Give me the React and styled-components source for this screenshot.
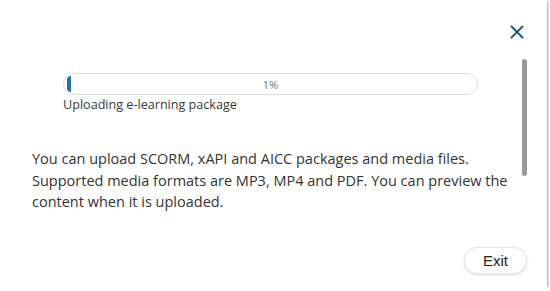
import React from 'react';
import styled, { createGlobalStyle } from 'styled-components';

const GlobalStyle = createGlobalStyle`
  html, body {
    margin: 0;
    padding: 0;
    background: #fff;
  }
  body {
    font-family: "Open Sans", "Noto Sans", sans-serif;
    color: #333;
  }
`;

const App = () => {
  const progress = 1;

  return (
    <>
      <GlobalStyle />
      <Dialog>
        <Header>
          <CloseButton aria-label="Close">
            <svg width="14" height="14" viewBox="0 0 14 14">
              <path d="M1.5 1.5 L12.5 12.5 M12.5 1.5 L1.5 12.5" stroke="#1f5d72" strokeWidth="2" strokeLinecap="round" fill="none" />
            </svg>
          </CloseButton>
        </Header>

        <Body>
          <Content>
            <Upload>
              <Track>
                <Fill style={{ width: `${progress}%` }} />
                <Percent>{progress}%</Percent>
              </Track>
              <Status>Uploading e-learning package</Status>
            </Upload>

            <Info>
              You can upload SCORM, xAPI and AICC packages and media files.
              Supported media formats are MP3, MP4 and PDF. You can preview the
              content when it is uploaded.
            </Info>
          </Content>
          <Scrollbar />
        </Body>

        <Footer>
          <ExitButton>Exit</ExitButton>
        </Footer>
      </Dialog>
    </>
  );
};

const Dialog = styled.div`
  width: 547px;
  height: 287px;
  background: #fff;
  box-shadow: 0 2px 3px rgba(0, 0, 0, 0.55), 1px 0 1px rgba(0, 0, 0, 0.08);
  display: flex;
  flex-direction: column;
`;

const Header = styled.div`
  display: flex;
  justify-content: flex-end;
  padding: 25px 23px 0 0;
  height: 34px;
`;

const CloseButton = styled.button`
  border: none;
  background: none;
  padding: 0;
  width: 14px;
  height: 14px;
  cursor: pointer;
  display: flex;
`;

const Body = styled.div`
  display: flex;
  margin-right: 20px;
`;

const Content = styled.div`
  flex: 1;
  padding: 14px 0 0 32px;
`;

const Upload = styled.div`
  margin-left: 31px;
  width: 415px;
`;

const Track = styled.div`
  position: relative;
  height: 22px;
  box-sizing: border-box;
  border: 1px solid #dedede;
  border-radius: 11px;
  overflow: hidden;
  padding: 2px 3px;
  display: flex;
  align-items: stretch;
`;

const Fill = styled.div`
  min-width: 4px;
  background: #1b7a9c;
  border-radius: 9px 0 0 9px;
`;

const Percent = styled.span`
  position: absolute;
  inset: 0;
  display: flex;
  align-items: center;
  justify-content: center;
  font-size: 11px;
  color: #777;
`;

const Status = styled.div`
  margin-top: 1px;
  font-size: 12.6px;
  line-height: 18px;
  color: #3a3a3a;
`;

const Info = styled.p`
  margin: 34px 0 0;
  font-size: 14.5px;
  line-height: 21.7px;
  color: #333;
`;

const Scrollbar = styled.div`
  width: 5px;
  height: 117px;
  border-radius: 3px;
  background: #999;
`;

const Footer = styled.div`
  margin-top: auto;
  display: flex;
  justify-content: flex-end;
  padding: 0 20px 13px 0;
`;

const ExitButton = styled.button`
  width: 63px;
  height: 27px;
  border: 1px solid #e6e6e6;
  border-radius: 14px;
  background: #fff;
  box-shadow: 0 1px 3px rgba(0, 0, 0, 0.15);
  font-family: "Liberation Sans", Arial, sans-serif;
  font-size: 15px;
  color: #222;
  cursor: pointer;
`;

export default App;
